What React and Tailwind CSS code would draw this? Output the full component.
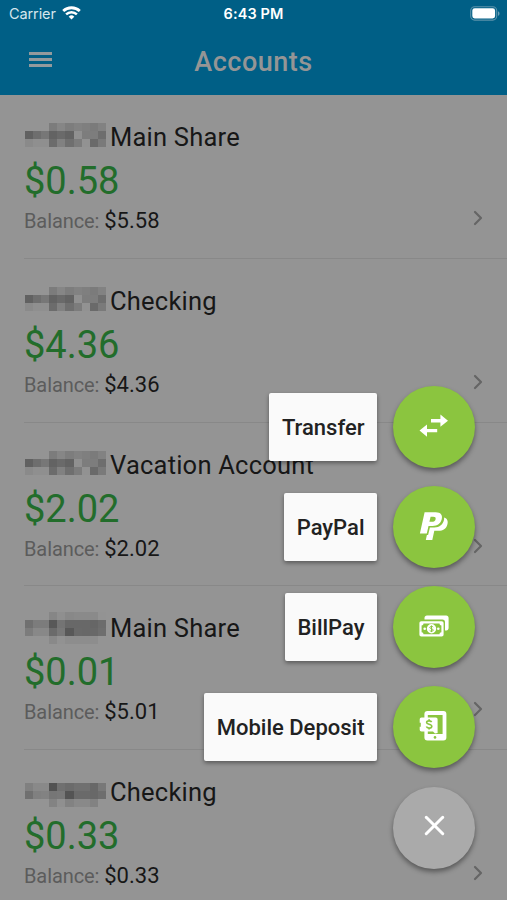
import { ChevronRight, X } from 'lucide-react';

const ACCOUNTS = [
  { name: 'Main Share', available: '$0.58', balance: '$5.58', mask: 'a' },
  { name: 'Checking', available: '$4.36', balance: '$4.36', mask: 'a' },
  { name: 'Vacation Account', available: '$2.02', balance: '$2.02', mask: 'a' },
  { name: 'Main Share', available: '$0.01', balance: '$5.01', mask: 'b' },
  { name: 'Checking', available: '$0.33', balance: '$0.33', mask: 'c' },
];

// Grey levels of the blocks that hide the account number, row by row
const MASKS = {
  a: {
    className: 'pb-1',
    rows: [
      [148, 148, 148, 124, 134, 125, 130, 127, 123, 130],
      [97, 110, 119, 99, 106, 99, 144, 125, 125, 110],
      [138, 143, 143, 108, 129, 111, 124, 146, 106, 122],
    ],
  },
  b: {
    className: '',
    rows: [
      [148, 148, 148, 134, 143, 136, 138, 138, 138, 147],
      [112, 124, 124, 88, 116, 104, 104, 104, 102, 108],
      [124, 136, 136, 107, 120, 88, 105, 104, 104, 110],
      [148, 148, 148, 137, 146, 141, 141, 141, 141, 148],
    ],
  },
  c: {
    className: 'pt-1.5',
    rows: [
      [128, 137, 137, 82, 112, 107, 112, 112, 104, 120],
      [112, 128, 130, 118, 120, 84, 106, 106, 104, 110],
      [148, 148, 148, 131, 144, 130, 137, 137, 130, 148],
    ],
  },
};

const ACTIONS = [
  { label: 'Transfer', icon: TransferIcon },
  { label: 'PayPal', icon: PayPalIcon },
  { label: 'BillPay', icon: BillPayIcon },
  { label: 'Mobile Deposit', icon: DepositIcon },
];

export default function App() {
  return (
    <div className="relative h-[900px] w-[507px] overflow-hidden bg-[#949494] font-['Roboto',sans-serif]">
      <Header />
      <main>
        {ACCOUNTS.map((account, i) => (
          <AccountRow key={i} account={account} />
        ))}
      </main>
      <SpeedDial />
    </div>
  );
}

function Header() {
  return (
    <header className="h-[95px] bg-[#005f86]">
      <div className="grid h-[27px] grid-cols-3 items-center pl-[9px] pr-[7px] font-['Inter',sans-serif] text-white">
        <div className="flex items-center gap-[6px]">
          <span className="text-[14.5px] tracking-[-0.1px] text-[#d5e6ed]">Carrier</span>
          <WifiIcon />
        </div>
        <span className="whitespace-nowrap pr-[2px] text-center text-[14.5px] font-semibold tracking-[0.1px]">
          6:43 PM
        </span>
        <div className="flex justify-end">
          <BatteryIcon />
        </div>
      </div>
      <div className="grid h-[68px] grid-cols-[80px_1fr_80px] items-center">
        <button aria-label="Menu" className="ml-[29px] flex w-[23px] flex-col gap-[3px] pb-[3px]">
          <span className="h-[3px] bg-[#929a9d]" />
          <span className="h-[3px] bg-[#929a9d]" />
          <span className="h-[3px] bg-[#929a9d]" />
        </button>
        <h1 className="pt-[2px] text-center text-[27px] font-medium leading-8 tracking-[0.5px] text-[#959595]">
          Accounts
        </h1>
      </div>
    </header>
  );
}

function AccountRow({ account }) {
  return (
    <section className="relative ml-6 h-[163.75px] border-b border-[#888] pt-[26px]">
      <div className="flex h-8 items-center">
        <Mask mask={MASKS[account.mask]} />
        <h2 className="ml-1 text-[25.5px] leading-8 tracking-[0.22px] text-[#171717]">{account.name}</h2>
      </div>
      <p className="mt-[5px] text-[38px] leading-[46px] text-[#226d2b]">{account.available}</p>
      <div className="mt-[3px] flex items-baseline gap-[5px] leading-7">
        <span className="text-[20px] tracking-[-0.1px] text-[#5c5c5c]">Balance:</span>
        <span className="text-[22px] text-[#171717]">{account.balance}</span>
      </div>
      <ChevronRight
        className="absolute right-[17.5px] top-[111.2px] h-6 w-6 text-[#656565]"
        strokeWidth={2.2}
      />
    </section>
  );
}

function Mask({ mask }) {
  return (
    <div className={`ml-px flex w-[81px] flex-col ${mask.className}`}>
      {mask.rows.map((row, y) => (
        <div key={y} className="flex">
          {row.map((level, x) => (
            <span
              key={x}
              className="h-2 flex-1"
              style={{ backgroundColor: `rgb(${level}, ${level}, ${level})` }}
            />
          ))}
        </div>
      ))}
    </div>
  );
}

function SpeedDial() {
  return (
    <div className="absolute right-8 top-[385.8px] flex flex-col items-end gap-[18.2px]">
      {ACTIONS.map(({ label, icon: Icon }) => (
        <div key={label} className="flex items-center gap-4">
          <span className="flex h-[68px] items-center rounded-[2px] bg-[#fafafa] px-[12.5px] pt-px text-[22px] font-medium text-[#222] shadow-[0_2px_4px_rgba(0,0,0,0.4)]">
            {label}
          </span>
          <button
            aria-label={label}
            className="grid h-[82px] w-[82px] place-items-center rounded-full bg-[#8bc53f] text-white shadow-[0_3px_5px_rgba(0,0,0,0.4)]"
          >
            <Icon />
          </button>
        </div>
      ))}
      <button
        aria-label="Close"
        className="grid h-[82px] w-[82px] place-items-center rounded-full bg-[#aaaaaa] text-white shadow-[0_3px_5px_rgba(0,0,0,0.4)]"
      >
        <X className="mb-1 h-[33px] w-[33px]" strokeWidth={2.2} />
      </button>
    </div>
  );
}

function WifiIcon() {
  return (
    <svg className="-mt-[2px]" width="19" height="14" viewBox="0 0 19 14" fill="none" stroke="currentColor">
      <path d="M1.2 5.1a12 12 0 0 1 16.6 0" strokeWidth="2.8" />
      <path d="M4.1 8.3a7.8 7.8 0 0 1 10.8 0" strokeWidth="2.5" />
      <path d="M9.5 13.5 6.7 10.7a4 4 0 0 1 5.6 0z" fill="currentColor" stroke="none" />
    </svg>
  );
}

function BatteryIcon() {
  return (
    <svg width="30" height="15" viewBox="0 0 30 15">
      <rect x="0.7" y="0.7" width="26" height="13.4" rx="4" fill="none" stroke="#5b93ab" strokeWidth="1.1" />
      <rect x="2.3" y="2.3" width="22.8" height="10.2" rx="2.4" fill="#fff" />
      <path d="M28 5.2c2 .8 2 3.8 0 4.6z" fill="#6b9fb5" />
    </svg>
  );
}

function TransferIcon() {
  return (
    <svg className="mb-px" width="30" height="24" viewBox="0 0 30 24" fill="currentColor">
      <path d="M12 5.1h9.4V.6l7.6 6.1-7.6 6.1V8.6H12z" />
      <path d="M18.2 14.9H8v-4.5L.5 16.6 8 22.7v-4.4h10.2z" />
    </svg>
  );
}

function PayPalIcon() {
  return (
    <svg className="mb-[2px]" width="30" height="30" viewBox="0 0 30 30">
      <path
        fill="currentColor"
        fillRule="evenodd"
        d="M5.6 1.3h11.1c5 0 7.2 2.8 6 7-1.1 4.4-4.4 6.7-9.1 6.7H9.5l-1.7 7.5H.9zm6 4.4-1.2 5.1h2.4c2.1 0 3.4-.8 3.8-2.6.4-1.7-.4-2.5-2.4-2.5z"
      />
      <path
        fill="currentColor"
        d="M25.1 6.4c3.2 1.1 4.4 3.8 3.2 7.3-1.2 4-4.2 6-8.8 6h-4.2l-2 9.2H6.8l1.1-4.9h1.2l1.8-7.6h4.4c5.4 0 8.8-3.1 9.8-8z"
      />
    </svg>
  );
}

function BillPayIcon() {
  return (
    <svg className="mb-[2px]" width="30" height="22" viewBox="0 0 30 22">
      <path
        fill="currentColor"
        d="M5.5 4.6V3.1C5.5 1.4 6.5.5 8 .5h19.2c1.5 0 2.4.9 2.4 2.4v10c0 1.7-1 2.6-3.6 2.6V7.3c0-1.8-.9-2.7-2.7-2.7z"
      />
      <path
        fill="currentColor"
        fillRule="evenodd"
        d="M2.4 6.2h20.2c1.3 0 2 .7 2 2v11.3c0 1.3-.7 2-2 2H2.4c-1.3 0-2-.7-2-2V8.2c0-1.3.7-2 2-2zm2.1 2.3c0 1.2-.8 2-1.9 2v6.7c1.1 0 1.9.8 1.9 2h16c0-1.2.8-2 1.9-2v-6.7c-1.1 0-1.9-.8-1.9-2z"
      />
      <circle cx="12.5" cy="13.8" r="4.7" fill="currentColor" />
      <circle cx="5.7" cy="13.8" r="1.3" fill="currentColor" />
      <circle cx="19.3" cy="13.8" r="1.3" fill="currentColor" />
      <path
        d="M14.2 12.1c-.5-1-3.4-1-3.4.4s3.5 1.1 3.5 2.6-3 1.5-3.6.3M12.5 10.5v6.6"
        fill="none"
        stroke="#8bc53f"
        strokeWidth="1"
      />
    </svg>
  );
}

function DepositIcon() {
  return (
    <svg className="mb-[3px]" width="30" height="32" viewBox="0 0 30 32">
      <path
        fill="currentColor"
        fillRule="evenodd"
        d="M8.4 1h16c2 0 3 1 3 3v23.6c0 2-1 3-3 3h-16c-2 0-3-1-3-3V4c0-2 1-3 3-3zm.4 4v19h14.8V5z"
      />
      <path
        fill="currentColor"
        d="M2.6 7.5h14c1.3 0 2 .7 2 2v13.4l-2.6.6-2-2.1H2.6c-1.2 0-1.9-.7-1.9-2v-2.6h1.1v-4H.7V9.5c0-1.3.7-2 1.9-2z"
      />
      <path
        d="M12.6 12.1c-.7-1.8-5-1.6-5 .5s5.2 1.3 5.2 3.7-4.7 2.3-5.4.3M10.1 9.2v1.7M10.1 17.8v1.8"
        fill="none"
        stroke="#8bc53f"
        strokeWidth="1.6"
      />
      <circle cx="16" cy="27.4" r="1.3" fill="#8bc53f" />
    </svg>
  );
}
